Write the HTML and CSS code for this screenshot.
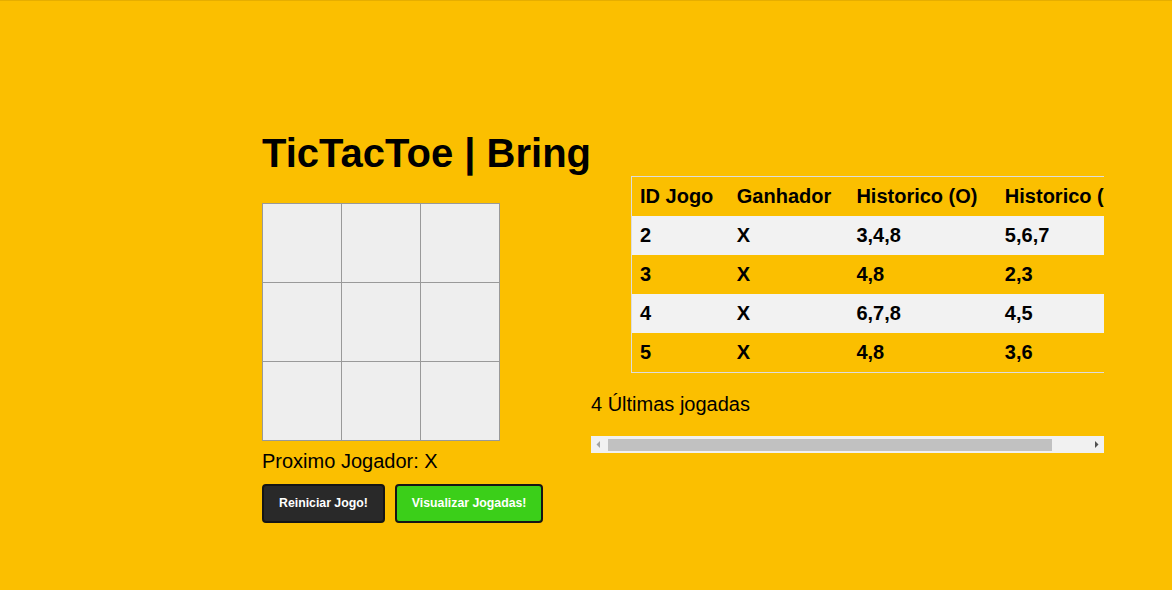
FILE: index.html
```html
<!DOCTYPE html>
<html lang="pt">
<head>
<meta charset="utf-8">
<title>TicTacToe | Bring</title>
<link rel="stylesheet" href="styles.css">
</head>
<body>
<div class="page">
  <div class="left">
    <h1 class="title">TicTacToe | Bring</h1>
    <div class="board">
      <div class="cell"></div><div class="cell"></div><div class="cell"></div>
      <div class="cell"></div><div class="cell"></div><div class="cell"></div>
      <div class="cell"></div><div class="cell"></div><div class="cell"></div>
    </div>
    <p class="status">Proximo Jogador: X</p>
    <div class="actions">
      <button class="btn btn-dark">Reiniciar Jogo!</button>
      <button class="btn btn-green">Visualizar Jogadas!</button>
    </div>
  </div>
  <div class="right">
    <div class="scroll">
      <table class="history">
        <thead>
          <tr><th>ID Jogo</th><th>Ganhador</th><th>Historico (O)</th><th>Historico (X)</th></tr>
        </thead>
        <tbody>
          <tr><td>2</td><td>X</td><td>3,4,8</td><td>5,6,7</td></tr>
          <tr><td>3</td><td>X</td><td>4,8</td><td>2,3</td></tr>
          <tr><td>4</td><td>X</td><td>6,7,8</td><td>4,5</td></tr>
          <tr><td>5</td><td>X</td><td>4,8</td><td>3,6</td></tr>
        </tbody>
      </table>
    </div>
    <p class="caption">4 Últimas jogadas</p>
    <div class="scrollbar">
      <span class="sb-btn">
        <svg width="17" height="17" viewBox="0 0 17 17"><polygon points="9,5 9,12 5.5,8.5" fill="#a3a3a3"/></svg>
      </span>
      <span class="sb-track"><span class="sb-thumb"></span></span>
      <span class="sb-btn">
        <svg width="17" height="17" viewBox="0 0 17 17"><polygon points="8,5 8,12 11.5,8.5" fill="#505050"/></svg>
      </span>
    </div>
  </div>
</div>
</body>
</html>
```
FILE: styles.css
```css
html, body {
  margin: 0;
  height: 100%;
}
body {
  background: #fbbf00;
  border-top: 1px solid #e6ae00;
  box-sizing: border-box;
  font-family: "Liberation Sans", Arial, sans-serif;
  color: #000;
}
.page {
  display: flex;
  align-items: flex-start;
  padding: 130px 0 0 262px;
}
.left {
  width: 329px;
  display: flex;
  flex-direction: column;
  align-items: flex-start;
}
.title {
  margin: 0;
  font-size: 40px;
  line-height: 45px;
  font-weight: bold;
  white-space: nowrap;
}
.board {
  margin-top: 27px;
  display: grid;
  grid-template-columns: repeat(3, 78px);
  grid-auto-rows: 78px;
  gap: 1px;
  background: #999;
  border: 1px solid #999;
}
.cell {
  background: #eeeeee;
}
.status {
  margin: 9px 0 0;
  font-size: 20px;
  line-height: 23px;
}
.actions {
  margin-top: 11px;
  display: flex;
  gap: 10px;
}
.btn {
  font-family: "Liberation Sans", Arial, sans-serif;
  font-size: 12.3px;
  font-weight: bold;
  line-height: 15px;
  padding: 10px 15px;
  border: 2px solid #151515;
  border-radius: 4px;
  color: #fff;
  cursor: pointer;
}
.btn-dark {
  background: #292929;
}
.btn-green {
  background: #3bcf19;
}
.right {
  width: 513px;
  margin-top: 45px;
}
.scroll {
  overflow: hidden;
}
.history {
  margin-left: 40px;
  width: 100%;
  border-collapse: collapse;
  border: 1px solid #dddddd;
}
.history th,
.history td {
  text-align: left;
  padding: 8px;
  font-size: 20px;
  line-height: 23px;
  font-weight: bold;
  white-space: nowrap;
}
.history tbody tr:nth-child(odd) {
  background: #f2f2f2;
}
.caption {
  margin: 20px 0;
  font-size: 20px;
  line-height: 23px;
}
.scrollbar {
  display: flex;
  height: 17px;
  background: #f1f1f1;
}
.sb-btn {
  width: 17px;
  height: 17px;
  flex: none;
  display: block;
}
.sb-btn svg {
  display: block;
}
.sb-track {
  flex: 1;
  display: flex;
  padding: 3px 0 2px;
}
.sb-thumb {
  width: 444px;
  background: #c1c1c1;
}
```
